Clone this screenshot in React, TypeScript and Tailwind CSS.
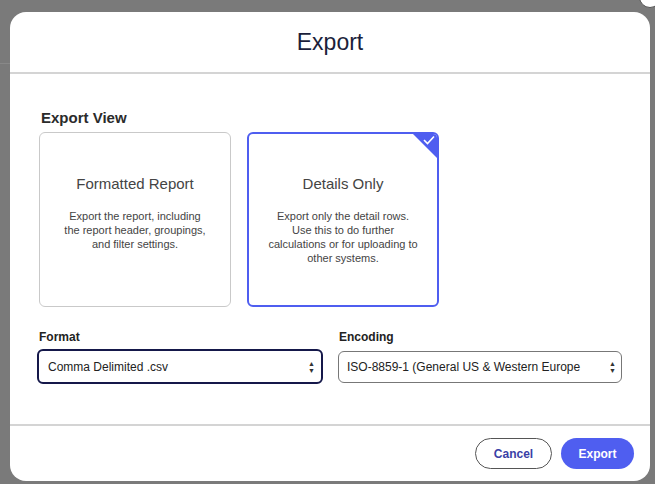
export default function App() {
  const font = { fontFamily: '"Liberation Sans", Arial, sans-serif' };
  return (
    <div className="relative w-[655px] h-[484px] overflow-hidden bg-[#7a7a7a]" style={font}>
      <div className="absolute left-0 top-[63px] w-[10px] h-px bg-[#888]" />
      <div className="absolute -right-[6px] -top-[14px] w-[22px] h-[22px] rounded-full bg-white border border-[#555]" />
      <div className="absolute left-[10px] top-[12px] w-[640px] h-[469px] bg-white rounded-[16px] flex flex-col overflow-hidden">
        <div className="h-[62px] flex items-center justify-center border-b-2 border-[#d4d4d4] shrink-0">
          <span className="text-[23px] text-[#1b1f3b]">Export</span>
        </div>
        <div className="flex-1 px-[28px] pt-[36px]">
          <div className="text-[15px] font-bold text-[#2b2b2b] leading-none mb-[7px] ml-[3px]">Export View</div>
          <div className="flex gap-[16px] ml-[1px]">
            <div className="w-[192px] h-[175px] border border-[#c9c9c9] rounded-[6px] flex flex-col items-center pt-[40px] px-[24px] text-center">
              <div className="text-[15px] text-[#444]">Formatted Report</div>
              <div className="text-[11px] leading-[14px] text-[#444] mt-[13px]">Export the report, including the report header, groupings, and filter settings.</div>
            </div>
            <div className="relative w-[192px] h-[175px] border-2 border-[#4f5ef0] rounded-[6px] flex flex-col items-center pt-[39px] px-[14px] text-center overflow-hidden">
              <div className="absolute -right-[1px] -top-[1px] w-0 h-0 border-t-[26px] border-l-[26px] border-t-[#4f5ef0] border-l-transparent" />
              <svg className="absolute right-[2px] top-[1px]" width="12" height="10" viewBox="0 0 12 10"><path d="M1 5 L4.5 8.5 L11 1.5" stroke="white" strokeWidth="1.6" fill="none" /></svg>
              <div className="text-[15px] text-[#444]">Details Only</div>
              <div className="text-[11px] leading-[14px] text-[#444] mt-[13px]">Export only the detail rows.<br />Use this to do further calculations or for uploading to other systems.</div>
            </div>
          </div>
          <div className="flex gap-[15px] mt-[21px] -ml-[1px]">
            <div className="w-[287px]">
              <div className="text-[12px] font-bold text-[#222] mb-[3px] ml-[2px]">Format</div>
              <div className="h-[35px] border-2 border-[#15184a] rounded-[6px] flex items-center justify-between pl-[9px] pr-[6px]">
                <span className="text-[12px] text-[#222]">Comma Delimited .csv</span>
                <span className="text-[7px] leading-[7px] text-[#333]">▲<br />▼</span>
              </div>
            </div>
            <div className="w-[285px]">
              <div className="text-[12px] font-bold text-[#222] mb-[5px] ml-[1px]">Encoding</div>
              <div className="h-[32px] border border-[#777] rounded-[6px] flex items-center pl-[8px] pr-[5px] overflow-hidden">
                <span className="flex-1 min-w-0 text-[12px] text-[#222] whitespace-nowrap overflow-hidden">ISO-8859-1 (General US &amp; Western Europe</span>
                <span className="shrink-0 text-[7px] leading-[7px] text-[#333]">▲<br />▼</span>
              </div>
            </div>
          </div>
        </div>
        <div className="h-[57px] border-t-2 border-[#d4d4d4] flex items-center justify-end gap-[9px] pr-[16px] shrink-0">
          <button className="w-[77px] h-[31px] rounded-full border border-[#555] text-[12px] font-bold text-[#3a3fa6]">Cancel</button>
          <button className="w-[73px] h-[31px] rounded-full bg-[#4f5ef0] text-[12px] font-bold text-white">Export</button>
        </div>
      </div>
    </div>
  );
}
